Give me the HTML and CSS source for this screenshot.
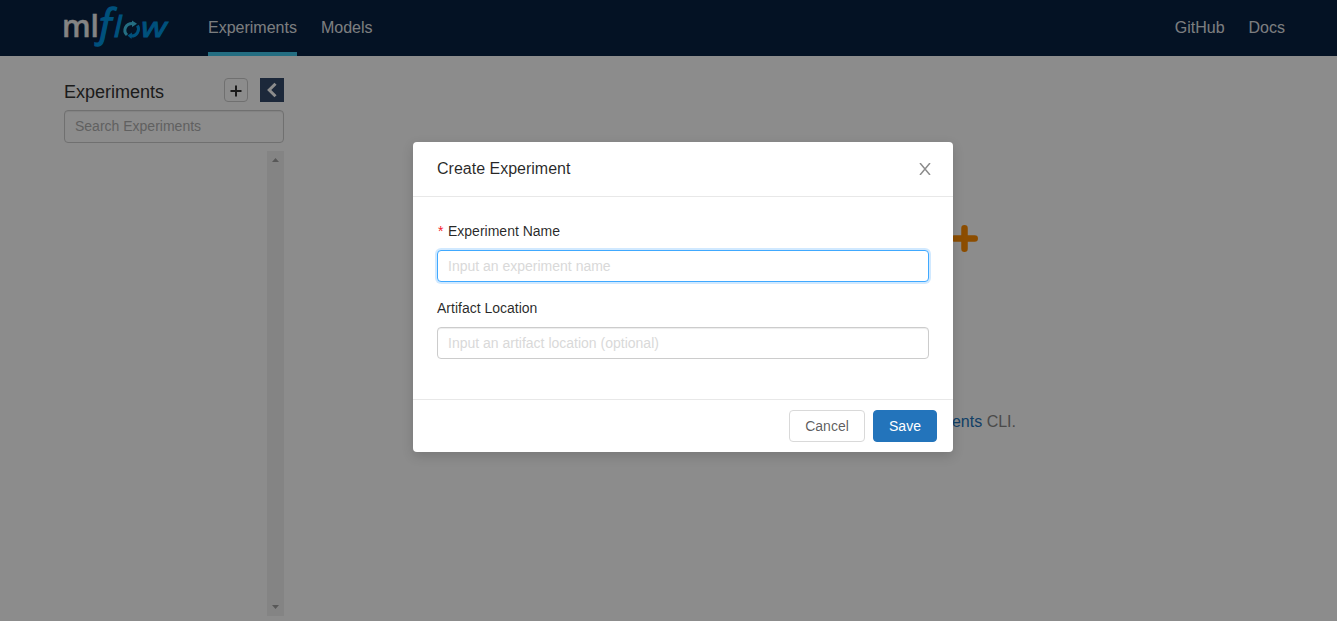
FILE: index.html
```html
<!DOCTYPE html>
<html lang="en">
<head>
<meta charset="utf-8">
<title>MLflow</title>
<link rel="stylesheet" href="styles.css">
</head>
<body>
<header class="topbar">
  <svg class="logo" width="108" height="44" viewBox="0 0 108 44" role="img" aria-label="mlflow">
    <text class="logo-ml" x="-2" y="33" textLength="37" lengthAdjust="spacingAndGlyphs">ml</text>
    <text class="logo-f" x="31" y="31.500" textLength="22" lengthAdjust="spacingAndGlyphs">ƒ</text>
    <text class="logo-flow" x="50" y="33">l</text>
    <path class="ring-light" d="M63 31C58.500 26.500 61.500 19.500 68.500 19.500"/>
    <path class="ring-dark" d="M73.500 21.500C76.500 26.500 72.500 32.500 66.500 32"/>
    <path class="tip-light" d="M68 16.500L73 19.700L68 23Z"/>
    <path class="tip-dark" d="M68 28.500L63.500 31.500L67.500 35Z"/>
    <text class="logo-flow logo-w" x="77" y="33" textLength="26" lengthAdjust="spacingAndGlyphs">w</text>
  </svg>
  <nav class="nav">
    <a class="nav-link active">Experiments</a>
    <a class="nav-link">Models</a>
  </nav>
  <nav class="nav nav-right">
    <a class="nav-link">GitHub</a>
    <a class="nav-link">Docs</a>
  </nav>
</header>
<main class="page">
  <aside class="sidebar">
    <div class="sidebar-head">
      <h1 class="sidebar-title">Experiments</h1>
      <button class="add-button" aria-label="Create"><svg width="12" height="12" viewBox="0 0 12 12"><path d="M6 0.500V11.500M0.500 6H11.500"/></svg></button>
      <button class="collapse-button" aria-label="Collapse"><svg width="12" height="16" viewBox="0 0 12 16"><path d="M9.500 1.700L3.200 8L9.500 14.300"/></svg></button>
    </div>
    <input class="search" placeholder="Search Experiments">
    <div class="scroll-track">
      <svg width="7" height="4" viewBox="0 0 7 4"><path d="M0 4L3.500 0L7 4Z"/></svg>
      <svg width="7" height="4" viewBox="0 0 7 4"><path d="M0 0H7L3.500 4Z"/></svg>
    </div>
  </aside>
  <section class="empty">
    <svg class="empty-plus" width="27" height="27" viewBox="0 0 27 27"><path d="M13.500 3.300V23.700M3.300 13.500H23.700"/></svg>
    <p class="empty-text"><a class="link">experiments</a> CLI.</p>
  </section>
</main>
<div class="mask">
  <div class="modal" role="dialog" aria-label="Create Experiment">
    <div class="modal-head">
      <h2 class="modal-title">Create Experiment</h2>
      <svg class="close" width="12" height="12" viewBox="0 0 12 12"><path d="M1 0L11 12M11 0L1 12"/></svg>
    </div>
    <form class="modal-body">
      <label class="label"><span class="required">*</span>Experiment Name</label>
      <input class="field focused" placeholder="Input an experiment name">
      <label class="label">Artifact Location</label>
      <input class="field" placeholder="Input an artifact location (optional)">
    </form>
    <div class="modal-foot">
      <button class="btn">Cancel</button>
      <button class="btn primary">Save</button>
    </div>
  </div>
</div>
</body>
</html>
```

FILE: styles.css
```css
* { box-sizing: border-box; }
body {
  margin: 0;
  height: 621px;
  overflow: hidden;
  background: #fff;
  color: #333;
  font-family: "Liberation Sans", Arial, sans-serif;
  font-size: 14px;
}
h1, h2, p { margin: 0; font-weight: 400; }
button, input { font: inherit; margin: 0; }
button { padding: 0; display: flex; align-items: center; justify-content: center; }

.topbar { display: flex; height: 56px; padding: 0 52px 0 64px; background: #082142; }
.logo { margin-top: 4px; overflow: visible; }
.logo-ml { font: 600 30px "Open Sans", sans-serif; fill: #f0f0f0; stroke: #f0f0f0; stroke-width: .4px; }
.logo-f { font: italic 41px "Open Sans", sans-serif; fill: #0194e2; stroke: #0194e2; stroke-width: 1.3px; }
.logo-flow { font: italic 30px "Open Sans", sans-serif; fill: #0194e2; stroke: #0194e2; stroke-width: 1.2px; }
.logo-w { font-size: 28px; stroke-width: .8px; }
.ring-light, .ring-dark { fill: none; stroke: #43c9ed; stroke-width: 3; }
.ring-dark { stroke: #0194e2; }
.tip-light { fill: #43c9ed; }
.tip-dark { fill: #0194e2; }
.nav { display: flex; gap: 24px; margin-left: 36px; }
.nav-right { margin-left: auto; }
.nav-link { height: 56px; line-height: 56px; font-size: 16px; color: rgba(255,255,255,.9); border-bottom: 4px solid transparent; }
.nav-link.active { border-color: #43c9ed; }

.page { display: flex; height: 565px; padding: 22px 64px 0; }
.sidebar { width: 220px; flex: none; display: flex; flex-direction: column; }
.sidebar-head { display: flex; height: 24px; align-items: center; }
.sidebar-title { flex: 1; font-size: 18px; line-height: 24px; padding-top: 3px; }
.add-button { width: 24px; height: 24px; padding-top: 2px; border: 1px solid #ccc; border-radius: 4px; background: #fff; }
.add-button path { stroke: #333; stroke-width: 2; }
.collapse-button { width: 24px; height: 24px; margin-left: 12px; border: 0; background: #34496a; }
.collapse-button path { fill: none; stroke: #fff; stroke-width: 3; }
.search { width: 220px; height: 33px; margin-top: 8px; padding: 0 10px 2px; border: 1px solid #ccc; border-radius: 4px; box-shadow: inset 0 1px 1px rgba(0,0,0,.075); }
.search::placeholder { color: #b0b0b0; opacity: 1; }
.scroll-track { display: flex; flex-direction: column; justify-content: space-between; align-items: center; align-self: flex-end; width: 17px; height: 465px; margin-top: 8px; padding: 7px 0; background: #f1f1f1; fill: #a0a0a0; }
.empty { width: 732px; display: flex; flex-direction: column; align-items: flex-end; }
.empty-plus { margin: 147px 38px 0 0; }
.empty-plus path { stroke: #ff8c00; stroke-width: 6.5; stroke-linecap: round; }
.empty-text { margin-top: 160px; font-size: 16px; line-height: 20px; color: #888; }
.link { color: #2374bb; }

.mask { position: absolute; inset: 0; padding-top: 142px; background: rgba(0,0,0,.45); }
.modal { width: 540px; height: 310px; margin-left: 413px; background: #fff; border-radius: 4px; box-shadow: 0 4px 12px rgba(0,0,0,.15); display: flex; flex-direction: column; }
.modal-head { display: flex; justify-content: space-between; height: 55px; padding: 16px 22px 0 24px; border-bottom: 1px solid #e8e8e8; }
.modal-title { font-size: 16px; line-height: 22px; color: rgba(0,0,0,.85); }
.close { margin-top: 5px; }
.close path { stroke: #8c8c8c; stroke-width: 1.5; }
.modal-body { flex: 1; display: flex; flex-direction: column; padding: 24px 24px 0; }
.label { height: 21px; line-height: 21px; color: rgba(0,0,0,.85); }
.required { display: inline-block; width: 11px; padding-left: 1px; color: #f5222d; }
.field { height: 32px; margin: 8px 0 16px; padding: 0 10px; border: 1px solid #ccc; border-radius: 4px; outline: none; box-shadow: inset 0 1px 1px rgba(0,0,0,.075); }
.field::placeholder { color: #d9d9d9; opacity: 1; }
.focused { border-color: #40a9ff; box-shadow: 0 0 0 2px rgba(24,144,255,.2); }
.modal-foot { display: flex; justify-content: flex-end; gap: 8px; height: 53px; padding: 10px 16px; border-top: 1px solid #e8e8e8; }
.btn { width: 76px; height: 32px; border: 1px solid #d9d9d9; border-radius: 4px; background: #fff; color: rgba(0,0,0,.65); }
.primary { width: 64px; border-color: #2374bb; background: #2374bb; color: #fff; }
```
